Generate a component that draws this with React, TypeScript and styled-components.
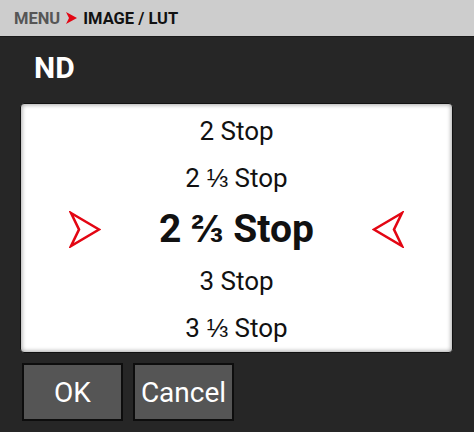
import styled, { createGlobalStyle } from "styled-components";

const GlobalStyle = createGlobalStyle`
  html, body {
    margin: 0;
    padding: 0;
    background: #262626;
    font-family: Roboto, "Liberation Sans", sans-serif;
  }
`;

const Screen = styled.div`
  width: 474px;
  height: 432px;
  display: flex;
  flex-direction: column;
  background: #262626;
  overflow: hidden;
`;

const Breadcrumb = styled.header`
  height: 36px;
  display: flex;
  align-items: center;
  gap: 6px;
  padding-left: 14px;
  background: #cdcdcd;
  border-bottom: 1px solid #1a1a1a;
  font-size: 16.5px;
  font-weight: 700;
`;

const Crumb = styled.span<{ $current?: boolean }>`
  color: ${(p) => (p.$current ? "#111" : "#565656")};
`;

const Title = styled.h1`
  margin: 0;
  height: 66px;
  padding-left: 34px;
  display: flex;
  align-items: center;
  padding-bottom: 6px;
  box-sizing: border-box;
  color: #fff;
  font-size: 30px;
  font-weight: 700;
`;

const Picker = styled.div`
  margin: 0 21px 0 20px;
  height: 250px;
  box-sizing: border-box;
  padding-top: 3px;
  display: flex;
  flex-direction: column;
  background: #fff;
  border: 1px solid #111;
  border-radius: 4px;
  box-shadow: inset 0 0 4px 1px rgba(0, 0, 0, 0.35);
`;

const Option = styled.div<{ $selected?: boolean }>`
  height: ${(p) => (p.$selected ? 56 : 47)}px;
  display: flex;
  align-items: center;
  justify-content: ${(p) => (p.$selected ? "space-between" : "center")};
  padding: 0 48px;
  color: #111;
  font-size: ${(p) => (p.$selected ? 39 : 26)}px;
  font-weight: ${(p) => (p.$selected ? 700 : 400)};
  line-height: 1;
`;

const Actions = styled.div`
  display: flex;
  gap: 10px;
  padding: 10px 0 0 22px;
`;

const Button = styled.button`
  width: 101px;
  height: 58px;
  box-sizing: border-box;
  background: #555;
  border: 2px solid #0d0d0d;
  color: #fff;
  font-family: inherit;
  font-size: 28px;
  padding: 0;
`;

const Dart = ({ flip }: { flip?: boolean }) => (
  <svg
    width="32"
    height="37"
    viewBox="0 0 32 37"
    style={flip ? { transform: "scaleX(-1)" } : undefined}
  >
    <polygon
      points="2,2 30,18.5 2,35 10,18.5"
      fill="none"
      stroke="#e30613"
      strokeWidth="2.6"
      strokeLinejoin="miter"
    />
  </svg>
);

const CrumbArrow = () => (
  <svg width="11" height="12" viewBox="0 0 11 12">
    <polygon points="0,0 11,6 0,12 3,6" fill="#e30613" />
  </svg>
);

const options = ["2 Stop", "2 ⅓ Stop", "2 ⅔ Stop", "3 Stop", "3 ⅓ Stop"];
const selected = 2;

export default function App() {
  return (
    <Screen>
      <GlobalStyle />
      <Breadcrumb>
        <Crumb>MENU</Crumb>
        <CrumbArrow />
        <Crumb $current>IMAGE / LUT</Crumb>
      </Breadcrumb>
      <Title>ND</Title>
      <Picker>
        {options.map((o, i) =>
          i === selected ? (
            <Option key={o} $selected>
              <Dart />
              <span>{o}</span>
              <Dart flip />
            </Option>
          ) : (
            <Option key={o}>{o}</Option>
          )
        )}
      </Picker>
      <Actions>
        <Button>OK</Button>
        <Button>Cancel</Button>
      </Actions>
    </Screen>
  );
}
